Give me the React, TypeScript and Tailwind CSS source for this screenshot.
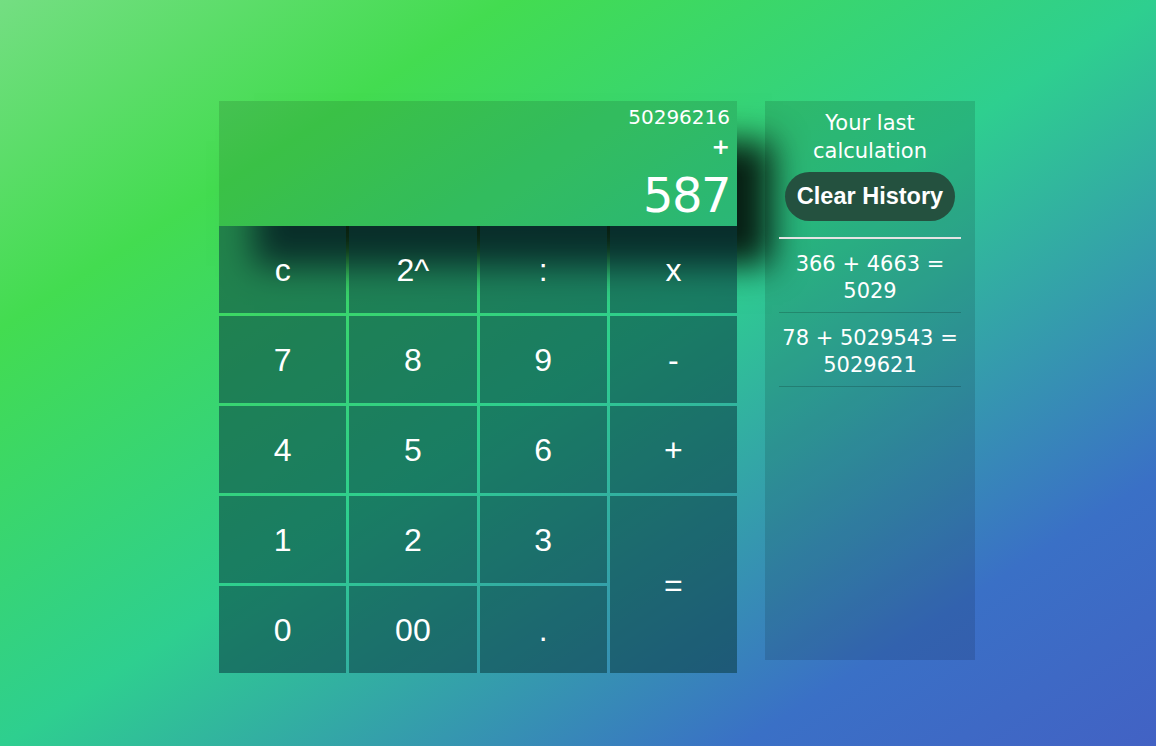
import React from "react";

const mont = { fontFamily: "'DejaVu Sans', Inter, sans-serif" };
const arial = { fontFamily: "'Liberation Sans', Arial, sans-serif" };

type Key = { label: string; cls?: string };

const keys: Key[] = [
  { label: "c" },
  { label: "2^" },
  { label: ":" },
  { label: "x" },
  { label: "7" },
  { label: "8" },
  { label: "9" },
  { label: "-" },
  { label: "4" },
  { label: "5" },
  { label: "6" },
  { label: "+" },
  { label: "1" },
  { label: "2" },
  { label: "3" },
  { label: "=", cls: "row-span-2" },
  { label: "0" },
  { label: "00" },
  { label: "." },
];

export default function App() {
  return (
    <div className="w-[1156px] h-[746px] overflow-hidden bg-[linear-gradient(to_bottom_right,#74de82_0%,#43dc50_22%,#2ecf8f_50%,#3a70c6_82%,#4262c4_100%)]">
      <div className="flex items-start gap-[28px] pl-[219px] pt-[101px]">
        {/* Calculator */}
        <div className="w-[518px] flex flex-col">
          <div
            className="h-[125px] bg-[rgba(0,0,0,0.12)] shadow-[35px_40px_32px_rgba(0,0,0,0.85)] flex flex-col items-end pr-[7px] pt-[3px] text-white"
            style={mont}
          >
            <div className="text-[20px] leading-[26px]">50296216</div>
            <div className="text-[22px] leading-[26px] mt-[4px] font-bold">+</div>
            <div className="text-[48px] leading-[48px] mt-[11px] tracking-[-1.5px]">587</div>
          </div>
          <div className="grid grid-cols-4 grid-rows-[repeat(5,87px)] gap-[3px]">
            {keys.map((k) => (
              <button
                key={k.label}
                className={`${k.cls ?? ""} bg-[rgba(10,58,64,0.55)] text-white text-[32px] flex items-center justify-center`}
                style={arial}
              >
                {k.label}
              </button>
            ))}
          </div>
        </div>

        {/* History */}
        <div className="w-[210px] h-[559px] bg-[rgba(0,0,0,0.12)] px-[14px] pt-[8px] flex flex-col items-center text-white" style={mont}>
          <div className="text-[21px] leading-[28px] text-center">
            Your last
            <br />
            calculation
          </div>
          <button
            className="mt-[7px] h-[49px] px-[12px] rounded-full bg-[#24513f] text-white font-bold text-[23.5px]"
            style={arial}
          >
            Clear History
          </button>
          <div className="mt-[16px] w-full h-[2px] bg-[#e4e4e4]" />
          {[
            ["366 + 4663 =", "5029"],
            ["78 + 5029543 =", "5029621"],
          ].map((e) => (
            <div
              key={e[0]}
              className="w-full text-center text-[21px] leading-[27px] pt-[12px] pb-[7px] border-b border-[rgba(0,0,0,0.18)] whitespace-nowrap"
            >
              {e[0]}
              <br />
              {e[1]}
            </div>
          ))}
        </div>
      </div>
    </div>
  );
}
